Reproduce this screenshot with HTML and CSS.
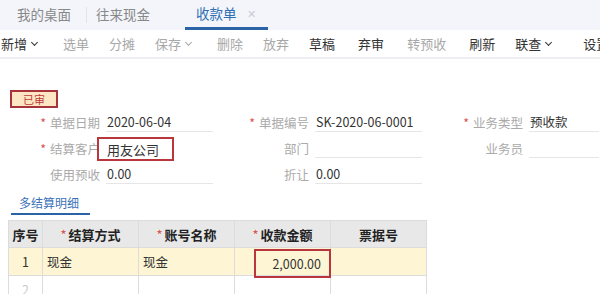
FILE: index.html
```html
<!DOCTYPE html>
<html lang="zh-CN">
<head>
  <meta charset="UTF-8">
  <title>收款单</title>
  <link rel="stylesheet" href="styles.css">
</head>
<body>
  <div class="tabs">
    <div class="tab">我的桌面</div>
    <div class="tab-sep"></div>
    <div class="tab">往来现金</div>
    <div class="tab active">收款单 <span class="close">✕</span></div>
  </div>

  <div class="toolbar">
    <span class="btn dark w-drop">新增<i class="chev"></i></span>
    <span class="btn">选单</span>
    <span class="btn">分摊</span>
    <span class="btn w-drop">保存<i class="chev"></i></span>
    <span class="btn">删除</span>
    <span class="btn">放弃</span>
    <span class="btn dark">草稿</span>
    <span class="sep"></span>
    <span class="btn dark">弃审</span>
    <span class="sep"></span>
    <span class="btn">转预收</span>
    <span class="sep"></span>
    <span class="btn dark">刷新</span>
    <span class="btn dark w-drop">联查<i class="chev"></i></span>
    <span class="sep"></span>
    <span class="btn dark">设置</span>
  </div>

  <div class="content">
    <div class="status">已审</div>

    <div class="form">
      <div class="field"><label><b>*</b>单据日期</label><span class="val">2020-06-04</span></div>
      <div class="field f2"><label><b>*</b>单据编号</label><span class="val">SK-2020-06-0001</span></div>
      <div class="field f3"><label><b>*</b>业务类型</label><span class="val">预收款</span></div>

      <div class="field"><label><b>*</b>结算客户</label><span class="val hl">用友公司</span></div>
      <div class="field f2"><label>部门</label><span class="val"></span></div>
      <div class="field f3"><label>业务员</label><span class="val"></span></div>

      <div class="field"><label>使用预收</label><span class="val">0.00</span></div>
      <div class="field f2"><label>折让</label><span class="val">0.00</span></div>
    </div>

    <div class="subtab">多结算明细</div>

    <table class="grid">
      <colgroup>
        <col class="w-no">
        <col class="w-col">
        <col class="w-col">
        <col class="w-col">
        <col class="w-col">
      </colgroup>
      <thead>
        <tr>
          <th>序号</th>
          <th><b>*</b>结算方式</th>
          <th><b>*</b>账号名称</th>
          <th><b>*</b>收款金额</th>
          <th>票据号</th>
        </tr>
      </thead>
      <tbody>
        <tr class="sel">
          <td class="c-no">1</td>
          <td>现金</td>
          <td>现金</td>
          <td class="amt"><span class="hl-box">2,000.00</span></td>
          <td></td>
        </tr>
        <tr>
          <td class="c-no faint">2</td>
          <td></td>
          <td></td>
          <td></td>
          <td></td>
        </tr>
      </tbody>
    </table>
  </div>
</body>
</html>
```

FILE: styles.css
```css
body {
  margin: 0;
  background: #fff;
  font-family: "Noto Sans CJK SC", "Noto Sans", sans-serif;
  font-size: 12px;
  color: #333;
  overflow: hidden;
}
.tabs {
  height: 30px;
  background: #f3f5fa;
  display: flex;
  align-items: stretch;
  padding-left: 17px;
}
.tab {
  display: flex;
  align-items: center;
  font-size: 13.5px;
  color: #888;
  padding-bottom: 2px;
}
.tab-sep {
  width: 1px;
  background: #e2e4ea;
  margin: 7px 9px 7px 15px;
}
.tab.active {
  margin-left: 46px;
  padding: 0 12px 2px 0;
  color: #2f6fb5;
  border-bottom: 3px solid #2b64a6;
  height: 25px;
  position: relative;
}
.tab.active::before {
  content: "";
  position: absolute;
  left: -11px;
  bottom: -3px;
  width: 11px;
  border-bottom: 3px solid #2b64a6;
}
.close {
  color: #c8ccd4;
  font-size: 11px;
  margin-left: 10px;
}
.toolbar {
  height: 27px;
  display: flex;
  align-items: center;
  border-bottom: 2px solid #eceef1;
  white-space: nowrap;
}
.btn {
  font-size: 13px;
  color: #a8a8a8;
  margin-right: 20px;
  display: flex;
  align-items: center;
}
.btn.dark {
  color: #333;
}
.btn:first-child {
  margin-left: 1px;
}
.chev {
  width: 4px;
  height: 4px;
  border-right: 1.5px solid currentColor;
  border-bottom: 1.5px solid currentColor;
  transform: rotate(45deg);
  margin: -3px 0 0 5px;
}
.w-drop {
  margin-right: 26px;
}
.sep {
  width: 1px;
  height: 13px;
  background: #e3e3e3;
  margin: 0 11px 0 -8px;
}
.sep:nth-last-child(2) {
  margin-right: 14px;
}
.content {
  padding: 31px 0 0 8px;
}
.status {
  width: 44px;
  height: 14px;
  line-height: 14px;
  text-align: center;
  font-size: 11px;
  color: #c0393b;
  background: #fde6c3;
  border: 2px solid #a7343a;
  margin-left: 2px;
}
.form {
  display: grid;
  grid-template-columns: 205px 209px 177px;
  row-gap: 5px;
  margin-top: 3px;
}
.field {
  display: flex;
  align-items: flex-end;
  height: 21px;
}
.field label {
  width: 98px;
  text-align: right;
  color: #aaa;
  font-size: 12.5px;
  padding-right: 6px;
  box-sizing: border-box;
  line-height: 18px;
}
.field label b {
  color: #d9534f;
  font-weight: normal;
  margin-right: 4px;
}
.f2 label {
  width: 102px;
}
.f3 label {
  width: 107px;
}
.val {
  width: 107px;
  height: 21px;
  line-height: 21px;
  border-bottom: 1px solid #e6e6e6;
  font-size: 12.5px;
  color: #333;
  box-sizing: border-box;
  padding-left: 1px;
}
.f3 .val {
  width: 70px;
}
.val.hl {
  outline: 2px solid #b8363c;
  outline-offset: 0;
  width: 73px;
  height: 20px;
  margin-left: -7px;
  margin-bottom: -1px;
  padding-left: 8px;
  margin-right: 41px;
  border-bottom: none;
  font-size: 13px;
}
.subtab {
  display: inline-block;
  margin: 10px 0 0 3px;
  padding: 0 11px 2px 8px;
  color: #3a72b8;
  font-size: 12px;
  border-bottom: 2px solid #2b64a6;
}
.grid {
  border-collapse: collapse;
  margin-top: 5px;
  width: 418px;
  table-layout: fixed;
}
.w-no {
  width: 34px;
}
.w-col {
  width: 96px;
}
.grid th, .grid td {
  border: 1px solid #dcdcdc;
  height: 26px;
  padding: 0 4px;
  font-size: 12.5px;
}
.grid th {
  background: #e8e8e8;
  color: #222;
  font-weight: bold;
  text-align: center;
  font-size: 13px;
}
.grid th:first-child {
  padding: 0;
}
.grid th b {
  color: #d9534f;
  font-weight: normal;
  margin-right: 2px;
}
.grid .c-no {
  text-align: center;
  padding: 0;
}
.sel td {
  background: #fdf5d4;
  height: 27px;
}
.amt {
  padding: 0 !important;
  position: relative;
}
.hl-box {
  position: absolute;
  left: 19px;
  right: -1px;
  top: 1px;
  bottom: -3px;
  border: 2px solid #b8363c;
  text-align: right;
  padding-right: 8px;
  line-height: 26px;
}
.faint {
  color: #ccc;
}
```
